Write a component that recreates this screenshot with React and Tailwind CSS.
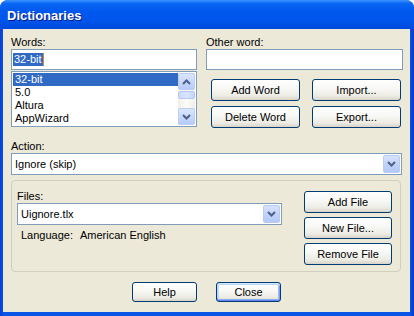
import React from 'react';

const font = { fontFamily: '"Liberation Sans", Arial, sans-serif' };

function Chevron({ up = false }) {
    return (
        <svg width="9" height="6" viewBox="0 0 9 6" className="block">
            <path
                d={up ? 'M1 5 L4.5 1.5 L8 5' : 'M1 1 L4.5 4.5 L8 1'}
                fill="none"
                stroke="#4d6185"
                strokeWidth="2"
            />
        </svg>
    );
}

function XpButton({ children, className = '', isDefault = false }) {
    return (
        <button
            className={
                'flex items-center justify-center rounded-[3px] border border-[#003c74] text-[11px] text-black leading-none ' +
                'bg-[linear-gradient(180deg,#ffffff_0%,#f7f7f4_45%,#ecebe3_80%,#d8d3c8_100%)] ' +
                (isDefault
                    ? 'shadow-[inset_0_1px_0_#cee7ff,inset_0_2px_0_#bcd4f6,inset_0_-1px_0_#6982ee,inset_0_-2px_0_#89adf4,inset_1px_0_0_#b9d1fa,inset_2px_0_0_#c8dafc,inset_-1px_0_0_#7a9cf1,inset_-2px_0_0_#9db9f5] '
                    : '') +
                className
            }
        >
            {children}
        </button>
    );
}

function ComboBox({ value, className = '' }) {
    return (
        <div className={'flex items-center h-[22px] border border-[#7f9db9] bg-white ' + className}>
            <span className="flex-1 pl-[3px] text-[11px] text-black">{value}</span>
            <div className="mr-[1px] flex h-[18px] w-[17px] items-center justify-center rounded-[2px] border border-[#b9cbf3] bg-[linear-gradient(180deg,#d7e3fd_0%,#c2d3fb_50%,#b4c8f6_100%)]">
                <Chevron />
            </div>
        </div>
    );
}

function ScrollBar() {
    return (
        <div className="flex w-[17px] flex-col bg-[#f5f4ee]">
            <div className="flex h-[17px] items-center justify-center rounded-[2px] border border-[#bccdf5] bg-[linear-gradient(180deg,#dbe6fe_0%,#c5d5fc_60%,#b7cbf8_100%)]">
                <Chevron up />
            </div>
            <div className="mt-[1px] h-[8px] rounded-[2px] border border-[#b4c7f3] bg-[linear-gradient(90deg,#c9d8fc_0%,#d9e4fe_50%,#c4d4fb_100%)]" />
            <div className="flex-1 bg-[linear-gradient(90deg,#f0efe6_0%,#fbfbf8_50%,#f0efe6_100%)]" />
            <div className="flex h-[17px] items-center justify-center rounded-[2px] border border-[#bccdf5] bg-[linear-gradient(180deg,#dbe6fe_0%,#c5d5fc_60%,#b7cbf8_100%)]">
                <Chevron />
            </div>
        </div>
    );
}

const words = ['32-bit', '5.0', 'Altura', 'AppWizard'];

export default function App() {
    return (
        <div style={font} className="w-[414px] h-[316px] bg-white">
            <div className="flex h-full w-full flex-col rounded-t-[8px] bg-[linear-gradient(90deg,#0840d8_0%,#0a54e6_1%,#0a54e6_99%,#0638c8_100%)]">
                {/* title bar */}
                <div className="flex h-[29px] items-center rounded-t-[8px] px-[7px] pt-[3px] bg-[linear-gradient(180deg,#3d95ff_0%,#0a66f4_12%,#0058ee_40%,#0055eb_70%,#0049dc_100%)]">
                    <span className="text-[13px] font-bold text-white [text-shadow:1px_1px_0_#0a1883]">Dictionaries</span>
                </div>

                {/* body */}
                <div className="ml-[3px] mr-[4px] mb-[4px] flex flex-1 flex-col bg-[#ece9d8] pl-[8px] pr-[7px] pt-[7px] text-[11px] text-black">
                    <div className="flex gap-[9px]">
                        <div className="flex w-[186px] flex-col">
                            <div className="h-[13px] leading-[13px]">Words:</div>
                            <div className="flex h-[21px] items-center border border-[#7f9db9] bg-white pl-[1px]">
                                <span className="bg-[#316ac5] px-[1px] leading-[13px] text-white">32-bit</span>
                                <span className="h-[13px] w-[1px] bg-[#d88a1c]" />
                            </div>
                            <div className="mt-[1px] flex h-[56px] border border-[#7f9db9] bg-white p-[1px]">
                                <div className="flex-1">
                                    {words.map((w, i) => (
                                        <div
                                            key={w}
                                            className={
                                                'h-[13px] pl-[2px] leading-[13px] ' +
                                                (i === 0 ? 'bg-[#316ac5] text-white' : '')
                                            }
                                        >
                                            {w}
                                        </div>
                                    ))}
                                </div>
                                <ScrollBar />
                            </div>
                        </div>

                        <div className="flex w-[197px] flex-col">
                            <div className="h-[13px] leading-[13px]">Other word:</div>
                            <div className="h-[21px] border border-[#7f9db9] bg-white" />
                            <div className="mt-[9px] grid grid-cols-[89px_89px] gap-x-[12px] gap-y-[5px] pl-[5px]">
                                <XpButton className="h-[22px]">Add Word</XpButton>
                                <XpButton className="h-[22px]">Import...</XpButton>
                                <XpButton className="h-[22px]">Delete Word</XpButton>
                                <XpButton className="h-[22px]">Export...</XpButton>
                            </div>
                        </div>
                    </div>

                    <div className="mt-[12px] h-[13px] leading-[13px]">Action:</div>
                    <ComboBox value="Ignore (skip)" className="w-[391px]" />

                    {/* files group */}
                    <div className="mt-[5px] flex h-[92px] w-[390px] rounded-[4px] border border-[#d0d0bf] pl-[5px] pr-[8px] pt-[9px]">
                        <div className="flex w-[265px] flex-col">
                            <div className="h-[13px] leading-[13px]">Files:</div>
                            <ComboBox value="Uignore.tlx" className="w-[265px]" />
                            <div className="mt-[4px] flex h-[13px] pl-[4px] leading-[13px]">
                                <span>Language:</span>
                                <span className="ml-[7px]">American English</span>
                            </div>
                        </div>
                        <div className="ml-auto mt-[1px] flex flex-col gap-[4px]">
                            <XpButton className="h-[22px] w-[88px]">Add File</XpButton>
                            <XpButton className="h-[22px] w-[88px]">New File...</XpButton>
                            <XpButton className="h-[22px] w-[88px]">Remove File</XpButton>
                        </div>
                    </div>

                    <div className="mt-[10px] flex justify-center gap-[19px] pr-[1px]">
                        <XpButton className="h-[20px] w-[65px]">Help</XpButton>
                        <XpButton className="h-[20px] w-[65px]" isDefault>Close</XpButton>
                    </div>
                </div>
            </div>
        </div>
    );
}
